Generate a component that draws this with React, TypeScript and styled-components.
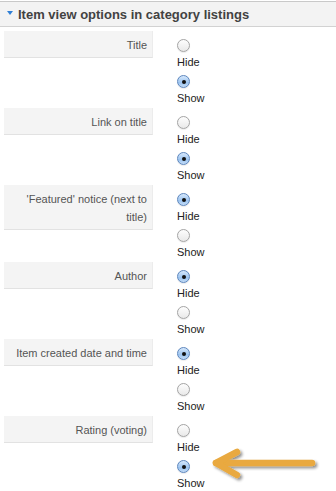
import styled, { createGlobalStyle } from "styled-components";

const GlobalStyle = createGlobalStyle`
  html, body {
    margin: 0;
    padding: 0;
    background: #fff;
    font-family: "Liberation Sans", Arial, sans-serif;
  }
`;

const Panel = styled.div`
  position: relative;
  width: 336px;
  height: 491px;
  overflow: hidden;
`;

const Header = styled.div`
  margin-top: 1px;
  height: 24px;
  display: flex;
  align-items: center;
  gap: 5px;
  padding-left: 7px;
  background: #f3f3f3;
  border-top: 1px solid #c9c9c9;
  border-bottom: 1px solid #d2d2d2;
  color: #424242;
  font-size: 13px;
  font-weight: bold;
`;

const Caret = styled.span`
  width: 0;
  height: 0;
  margin-top: -2px;
  border-left: 3.5px solid transparent;
  border-right: 3.5px solid transparent;
  border-top: 4px solid #2f7fd6;
`;

const List = styled.div`
  padding-top: 4px;
`;

const Row = styled.div`
  display: flex;
  align-items: flex-start;
  height: 77px;
`;

const Label = styled.div`
  box-sizing: border-box;
  width: 149px;
  margin-left: 4px;
  padding: 5px 5px 3px;
  line-height: 18px;
  background: #f4f4f4;
  border-bottom: 1px solid #e2e2e2;
  border-right: 1px solid #ececec;
  color: #555;
  font-size: 11px;
  text-align: right;
`;

const Controls = styled.div`
  margin-left: 24px;
  padding-top: 5px;
`;

const Option = styled.div`
  display: flex;
  flex-direction: column;
  align-items: flex-start;
`;

const Radio = styled.span<{ $on: boolean }>`
  position: relative;
  box-sizing: border-box;
  width: 13px;
  height: 13px;
  margin-top: 3px;
  border-radius: 50%;
  border: 1px solid ${(p) => (p.$on ? "#5d86bd" : "#a4a4a4")};
  background: ${(p) =>
    p.$on
      ? "linear-gradient(#d6e8fc, #9cc4f0 60%, #c3dcf7)"
      : "linear-gradient(#fdfdfd, #e9e9e9)"};
  box-shadow: 0 1px 1px rgba(0, 0, 0, 0.08);

  &::after {
    content: "";
    display: ${(p) => (p.$on ? "block" : "none")};
    position: absolute;
    left: 3.5px;
    top: 3.5px;
    width: 4px;
    height: 4px;
    border-radius: 50%;
    background: #111;
  }
`;

const OptionText = styled.span`
  line-height: 20px;
  font-size: 11px;
  color: #222;
`;

const Arrow = styled.svg`
  position: absolute;
  left: 208px;
  top: 443px;
`;

const rows = [
  { label: "Title", show: true },
  { label: "Link on title", show: true },
  { label: "'Featured' notice (next to title)", show: false },
  { label: "Author", show: false },
  { label: "Item created date and time", show: false },
  { label: "Rating (voting)", show: true },
];

function App() {
  return (
    <Panel>
      <GlobalStyle />
      <Header>
        <Caret />
        Item view options in category listings
      </Header>
      <List>
        {rows.map((r) => (
          <Row key={r.label}>
            <Label>{r.label}</Label>
            <Controls>
              <Option>
                <Radio $on={!r.show} />
                <OptionText>Hide</OptionText>
              </Option>
              <Option>
                <Radio $on={r.show} />
                <OptionText>Show</OptionText>
              </Option>
            </Controls>
          </Row>
        ))}
      </List>
      <Arrow width="120" height="44" viewBox="0 0 120 44">
        <defs>
          <filter id="sh" x="-20%" y="-40%" width="140%" height="180%">
            <feGaussianBlur in="SourceAlpha" stdDeviation="1.5" />
            <feOffset dx="1.5" dy="2" result="b" />
            <feComponentTransfer>
              <feFuncA type="linear" slope="0.45" />
            </feComponentTransfer>
            <feMerge>
              <feMergeNode />
              <feMergeNode in="SourceGraphic" />
            </feMerge>
          </filter>
        </defs>
        <g
          filter="url(#sh)"
          stroke="#e9a93f"
          strokeWidth="6.5"
          strokeLinecap="round"
          strokeLinejoin="round"
          fill="none"
        >
          <path d="M8 20 H104" />
          <path d="M29 9 L8 20 L29 32" />
        </g>
      </Arrow>
    </Panel>
  );
}

export default App;
